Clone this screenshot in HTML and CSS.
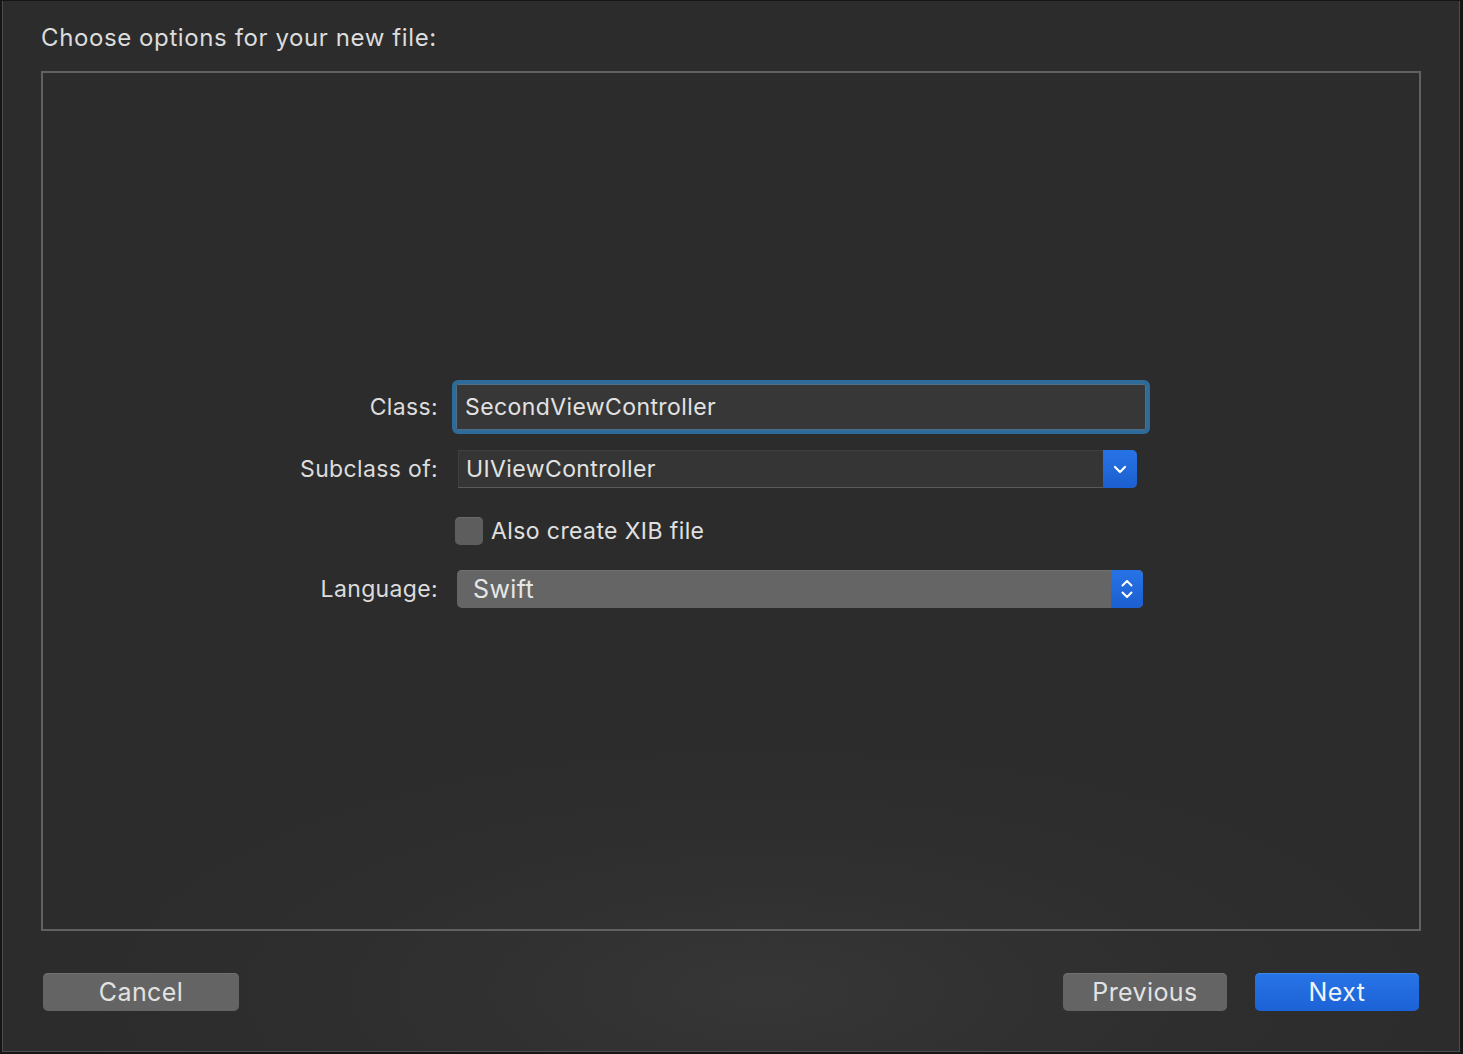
FILE: index.html
```html
<!DOCTYPE html>
<html>
<head>
<meta charset="utf-8">
<link rel="stylesheet" href="styles.css">
</head>
<body>
<div class="window">
  <h1 class="title">Choose options for your new file:</h1>
  <div class="panel">
    <div class="form">
      <div class="row row-class">
        <div class="label">Class:</div>
        <div class="textfield"><span>SecondViewController</span></div>
      </div>
      <div class="row row-sub">
        <div class="label">Subclass of:</div>
        <div class="combo">
          <span class="combo-text">UIViewController</span>
          <span class="combo-btn">
            <svg width="14" height="9" viewBox="0 0 14 9"><path d="M2 2 L7 7 L12 2" fill="none" stroke="#fff" stroke-width="2.2" stroke-linecap="round" stroke-linejoin="round"/></svg>
          </span>
        </div>
      </div>
      <div class="row row-check">
        <div class="label"></div>
        <div class="checkbox"></div>
        <span class="check-label">Also create XIB file</span>
      </div>
      <div class="row row-lang">
        <div class="label">Language:</div>
        <div class="popup">
          <span class="popup-text">Swift</span>
          <span class="popup-btn">
            <svg width="14" height="24" viewBox="0 0 14 24"><path d="M2.5 8.5 L7 4 L11.5 8.5" fill="none" stroke="#fff" stroke-width="2" stroke-linecap="round" stroke-linejoin="round"/><path d="M2.5 15.5 L7 20 L11.5 15.5" fill="none" stroke="#fff" stroke-width="2" stroke-linecap="round" stroke-linejoin="round"/></svg>
          </span>
        </div>
      </div>
    </div>
  </div>
  <div class="footer">
    <button class="btn btn-cancel">Cancel</button>
    <div class="spacer"></div>
    <button class="btn btn-prev">Previous</button>
    <button class="btn btn-next">Next</button>
  </div>
</div>
</body>
</html>
```

FILE: styles.css
```css
* { box-sizing: border-box; }
html, body { margin: 0; height: 100%; }
body {
  background: #161616;
  padding: 1px 3px 2px 2px;
  font-family: Inter, "Noto Sans", "Liberation Sans", sans-serif;
  color: #dedede;
}
.window {
  height: 1051px;
  border-left: 1px solid #4d4d4d;
  border-right: 1px solid #4d4d4d;
  border-bottom: 1px solid #4d4d4d;
  background: radial-gradient(ellipse 700px 260px at 760px 990px, #363636 0%, #2e2e2e 60%, #2c2c2c 100%), #2c2c2c;
  display: flex;
  flex-direction: column;
}
.title {
  margin: 22px 0 0 38px;
  font-size: 24px;
  line-height: 30px;
  font-weight: 400;
  color: #dcdcdc;
  letter-spacing: 0.6px;
}
.panel {
  margin: 18px 38px 0 38px;
  height: 860px;
  border: 2px solid #616161;
}
.form {
  padding-top: 307px;
  display: flex;
  flex-direction: column;
}
.row {
  display: flex;
  align-items: center;
}
.label {
  width: 395px;
  flex: none;
  text-align: right;
  font-size: 23px;
  letter-spacing: 0.35px;
  color: #dcdcdc;
}
.row-class { height: 54px; }
.textfield {
  margin-left: 14px;
  width: 698px;
  height: 54px;
  border: 4px solid #2e6b98;
  border-radius: 6px;
  background: #373737;
  box-shadow: inset 0 0 0 1px #4f6f88;
  display: flex;
  align-items: center;
  padding-left: 9px;
  font-size: 23px;
  letter-spacing: 0.4px;
  color: #e2e2e2;
}
.row-sub { margin-top: 16px; height: 38px; }
.combo {
  margin-left: 20px;
  width: 679px;
  height: 38px;
  display: flex;
  background: #353535;
  border-top: 1px solid #3f3f3f;
  border-bottom: 1px solid #5a5a5a;
  border-radius: 0 5px 5px 0;
}
.combo-text {
  flex: 1;
  display: flex;
  align-items: center;
  padding-left: 7px;
  font-size: 23px;
  letter-spacing: 0.4px;
  color: #e2e2e2;
  border-left: 1px solid #3d3d3d;
}
.combo-btn {
  width: 34px;
  margin: -1px 0 -1px 0;
  background: linear-gradient(#2773e6, #1c5fd0);
  border-radius: 0 5px 5px 0;
  display: flex;
  align-items: center;
  justify-content: center;
}
.row-check { margin-top: 29px; height: 28px; }
.checkbox {
  margin-left: 17px;
  width: 28px;
  height: 28px;
  border-radius: 5px;
  background: #5d5d5d;
  box-shadow: inset 0 1px 0 #6a6a6a;
}
.check-label {
  margin-left: 8px;
  font-size: 23px;
  letter-spacing: 0.4px;
  color: #e0e0e0;
}
.row-lang { margin-top: 25px; height: 38px; }
.popup {
  margin-left: 19px;
  width: 686px;
  height: 38px;
  display: flex;
  background: #656565;
  border-radius: 5px;
  box-shadow: inset 0 1px 0 #707070;
}
.popup-text {
  flex: 1;
  display: flex;
  align-items: center;
  padding-left: 16px;
  font-size: 25px;
  letter-spacing: 0.4px;
  color: #e6e6e6;
}
.popup-btn {
  width: 32px;
  background: linear-gradient(#2773e6, #1c5fd0);
  border-radius: 0 5px 5px 0;
  display: flex;
  align-items: center;
  justify-content: center;
}
.footer {
  margin-top: 42px;
  padding: 0 40px;
  display: flex;
  align-items: center;
}
.spacer { flex: 1; }
.btn {
  height: 38px;
  border: none;
  border-radius: 5px;
  font-family: Inter, "Noto Sans", "Liberation Sans", sans-serif;
  font-size: 25px;
  letter-spacing: 0.4px;
  color: #e2e2e2;
  padding: 0;
  background: #646464;
  box-shadow: inset 0 1px 0 #707070;
}
.btn-cancel { width: 196px; }
.btn-prev { width: 164px; }
.btn-next {
  width: 164px;
  margin-left: 28px;
  background: linear-gradient(#2774e6, #1c62d6);
  box-shadow: inset 0 1px 0 #3d86ee;
  color: #eef3fb;
}
```
